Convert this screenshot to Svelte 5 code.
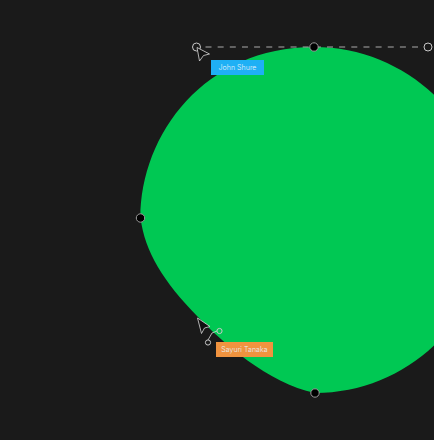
<script>
  const anchors = [
    [314, 47],
    [140.5, 218],
    [315, 393]
  ];
  const handles = [
    { x: 196.5, y: 47, r: 4 },
    { x: 428, y: 47, r: 4 },
    { x: 208, y: 342.5, r: 2.6 },
    { x: 219.5, y: 331, r: 2.6 }
  ];
</script>

<main class="canvas">
  <svg class="art" width="434" height="440" viewBox="0 0 434 440" aria-hidden="true">
    <path class="blob" d="M314 47 C205 47 140.5 134 140.5 218 C145 252 163 281 198 317 C222 342 268 383 315 393 C410.5 393 488 315.5 488 220 C488 124.5 410 47 314 47 Z" />
    <line class="dash" x1="205.5" y1="47" x2="424" y2="47" />
    <path class="thin" d="M208 340 L212 333 L217 331" />
    {#each handles as h}
      <circle class="handle" cx={h.x} cy={h.y} r={h.r} />
    {/each}
    {#each anchors as [x, y]}
      <circle class="anchor" cx={x} cy={y} r="4.2" />
    {/each}
    <path class="cursor" d="M197 47.5 L209.5 54 L203.5 55.5 L199.5 61 Z" />
    <path class="cursor" d="M197.5 318 L210 326.5 L204.5 328 L201.5 333.5 Z" />
  </svg>
  <span class="tag john">John Shure</span>
  <span class="tag sayuri">Sayuri Tanaka</span>
</main>

<style>
  :global(body) {
    margin: 0;
    background: #1a1a1a;
  }
  .canvas {
    position: relative;
    display: block;
    width: 434px;
    height: 440px;
    overflow: hidden;
    background: #1a1a1a;
  }
  .art {
    position: absolute;
    inset: 0;
    display: block;
  }
  .blob {
    fill: #00c853;
  }
  .dash {
    stroke: #aaaaaa;
    stroke-width: 1.2;
    stroke-dasharray: 6 6.15;
  }
  .thin {
    fill: none;
    stroke: #d8d8d8;
    stroke-width: 0.8;
  }
  .handle {
    fill: none;
    stroke: #c8c8c8;
    stroke-width: 1;
  }
  .anchor {
    fill: #000;
    stroke: #9a9a9a;
    stroke-width: 1;
  }
  .cursor {
    fill: #111;
    stroke: #d8d8d8;
    stroke-width: 0.8;
  }
  .tag {
    position: absolute;
    display: flex;
    align-items: center;
    justify-content: center;
    height: 15px;
    color: #e6f3fa;
    font-family: Inter, "Open Sans", sans-serif;
    font-size: 7px;
    font-weight: 300;
    letter-spacing: 0.05px;
    white-space: nowrap;
  }
  .john {
    left: 211px;
    top: 60px;
    width: 53px;
    background: #1fb0f5;
  }
  .sayuri {
    left: 216px;
    top: 342px;
    width: 57px;
    background: #f0933f;
  }
</style>
